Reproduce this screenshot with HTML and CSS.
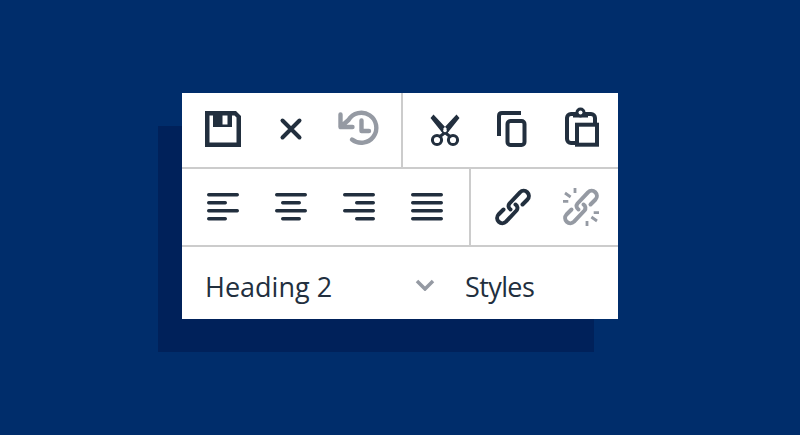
FILE: index.html
```html
<!DOCTYPE html>
<html lang="en">
<head>
  <meta charset="UTF-8" />
  <meta name="viewport" content="width=device-width, initial-scale=1" />
  <title>Editor toolbar</title>
  <link rel="stylesheet" href="styles.css">
</head>
<body>
  <div class="toolbar">
    <div class="row row-top">
      <div class="group">
        <button class="btn" aria-label="Save">
          <svg class="icon" viewBox="0 0 48 48"><path class="solid" fill-rule="evenodd" d="M6 6H37L42 11V42H6ZM10.500 10.500V37.500H37.500V12.500L35.500 10.500H33V22H14V10.500ZM23.500 10.500V19.500H28.500V10.500Z"/></svg>
        </button>
        <button class="btn" aria-label="Cancel">
          <svg class="icon" viewBox="0 0 48 48"><path class="line" d="M15.500 15.500L32.500 32.500M32.500 15.500L15.500 32.500"/></svg>
        </button>
        <button class="btn off" aria-label="Restore draft">
          <svg class="icon" viewBox="0 0 48 48"><path class="line heavy" d="M5.500 9.500V22H17.500M5.500 22L13.500 15A15 15 0 1 1 17 34.500M26.500 15.500V26H34"/></svg>
        </button>
      </div>
      <div class="group">
        <button class="btn" aria-label="Cut">
          <svg class="icon" viewBox="0 0 48 48">
            <path class="solid" d="M9.500 13L12.500 9.500L26 24L21.500 28ZM38.500 13L35.500 9.500L22 24L26.500 28Z"/>
            <path class="thin" d="M22 26L29 31.500M26 26L19 31.500"/>
            <circle class="thin" cx="16" cy="35" r="4.600"/>
            <circle class="thin" cx="32" cy="35" r="4.600"/>
            <circle class="dot" cx="24" cy="25.500" r="1.800"/>
          </svg>
        </button>
        <button class="btn" aria-label="Copy">
          <svg class="icon" viewBox="0 0 48 48">
            <path class="line flat" d="M10 31V11Q10 8 13 8H32"/>
            <rect class="line" x="18.500" y="16" width="17" height="24" rx="3"/>
          </svg>
        </button>
        <button class="btn" aria-label="Paste">
          <svg class="icon" viewBox="0 0 48 48">
            <rect class="line" x="10" y="9" width="28" height="29" rx="4"/>
            <circle class="solid" cx="23.500" cy="7.500" r="5"/>
            <rect class="solid" x="16" y="9" width="15" height="3.500"/>
            <circle class="dot" cx="23.500" cy="7.500" r="2"/>
            <rect class="line paper" x="20" y="19.700" width="20" height="20"/>
          </svg>
        </button>
      </div>
    </div>
    <div class="row row-mid">
      <div class="group">
        <button class="btn" aria-label="Align left">
          <svg class="icon" viewBox="0 0 48 48"><path class="bars" d="M9.700 11.700H38.300M9.700 19.700H26.300M9.700 27.700H38.300M9.700 35.700H26.300"/></svg>
        </button>
        <button class="btn" aria-label="Align center">
          <svg class="icon" viewBox="0 0 48 48"><path class="bars" d="M9.700 11.700H38.300M15.700 19.700H32.300M9.700 27.700H38.300M15.700 35.700H32.300"/></svg>
        </button>
        <button class="btn" aria-label="Align right">
          <svg class="icon" viewBox="0 0 48 48"><path class="bars" d="M9.700 11.700H38.300M21.700 19.700H38.300M9.700 27.700H38.300M21.700 35.700H38.300"/></svg>
        </button>
        <button class="btn" aria-label="Justify">
          <svg class="icon" viewBox="0 0 48 48"><path class="bars" d="M9.700 11.700H38.300M9.700 19.700H38.300M9.700 27.700H38.300M9.700 35.700H38.300"/></svg>
        </button>
      </div>
      <div class="group">
        <button class="btn" aria-label="Link">
          <svg class="icon" viewBox="0 0 48 48">
            <path class="line" d="M21.500 26.500A4 4 0 0 1 20.500 20.500L31 9.300A5.200 5.200 0 0 1 38.500 16.500L33.500 21.500"/>
            <path class="line" transform="rotate(180 24 24)" d="M21.500 26.500A4 4 0 0 1 20.500 20.500L31 9.300A5.200 5.200 0 0 1 38.500 16.500L33.500 21.500"/>
          </svg>
        </button>
        <button class="btn off" aria-label="Remove link">
          <svg class="icon" viewBox="0 0 48 48">
            <path class="line" d="M21.500 26.500A4 4 0 0 1 20.500 20.500L31 9.300A5.200 5.200 0 0 1 38.500 16.500L33.500 21.500"/>
            <path class="line" transform="rotate(180 24 24)" d="M21.500 26.500A4 4 0 0 1 20.500 20.500L31 9.300A5.200 5.200 0 0 1 38.500 16.500L33.500 21.500"/>
            <path class="spark" d="M8 10L13.600 14M18 5V10M6 18.300H11.300M40 38L34.400 34M30 43V38M42 29.700H36.700"/>
          </svg>
        </button>
      </div>
    </div>
    <div class="row-bottom">
      <button class="select">
        <span>Heading 2</span>
        <svg class="chevron" viewBox="0 0 20 12"><path d="M2 2L10 10L18 2"/></svg>
      </button>
      <button class="select select-tight">
        <span>Styles</span>
      </button>
    </div>
  </div>
</body>
</html>
```

FILE: styles.css
```css
:root {
  --bg: #002d6b;
  --shadow: #00215a;
  --ink: #222f3e;
  --muted: #959aa3;
  --border: #cccccc;
}

* {
  margin: 0;
  padding: 0;
  box-sizing: border-box;
}

body {
  background: var(--bg);
  min-height: 100vh;
  display: flex;
  justify-content: center;
  align-items: flex-start;
  padding-top: 93px;
  font-family: "Open Sans", "Noto Sans", sans-serif;
  overflow: hidden;
}

.toolbar {
  width: 436px;
  background: #fff;
  box-shadow: -24px 33px 0 var(--shadow);
  color: var(--ink);
}

.row {
  display: flex;
  border-bottom: 2px solid var(--border);
}

.group {
  display: flex;
  gap: 20px;
  padding: 14px 18px;
  border-right: 2px solid var(--border);
}

.group:first-child {
  padding-left: 17px;
}

.group:last-child {
  border-right: none;
}

.row-top .group {
  padding-top: 12px;
}

.btn {
  width: 48px;
  height: 48px;
  background: none;
  border: none;
  color: var(--ink);
}

.btn.off {
  color: var(--muted);
}

.icon {
  display: block;
  width: 48px;
  height: 48px;
}

.solid {
  fill: currentColor;
}

.line,
.thin,
.bars,
.spark {
  fill: none;
  stroke: currentColor;
  stroke-linecap: round;
  stroke-linejoin: round;
}

.line {
  stroke-width: 4;
}

.line.heavy {
  stroke-width: 4.400;
}

.line.flat {
  stroke-linecap: butt;
}

.line.paper {
  fill: #fff;
  stroke-linejoin: miter;
}

.thin {
  stroke-width: 3;
}

.bars {
  stroke-width: 3.400;
}

.spark {
  stroke-width: 2.800;
  stroke-linecap: butt;
}

.dot {
  fill: #fff;
}

.row-bottom {
  display: flex;
  height: 72px;
  padding-left: 23px;
}

.select {
  display: flex;
  align-items: center;
  justify-content: space-between;
  background: none;
  border: none;
  color: var(--ink);
  font-family: inherit;
  font-size: 27px;
}

.select:first-child {
  width: 230px;
  margin-right: 30px;
}

.select-tight {
  letter-spacing: -0.600px;
}

.select span {
  position: relative;
  top: 3px;
}

.chevron {
  width: 20px;
  height: 12px;
  margin-top: 4px;
}

.chevron path {
  fill: none;
  stroke: var(--muted);
  stroke-width: 3.500;
}
```
